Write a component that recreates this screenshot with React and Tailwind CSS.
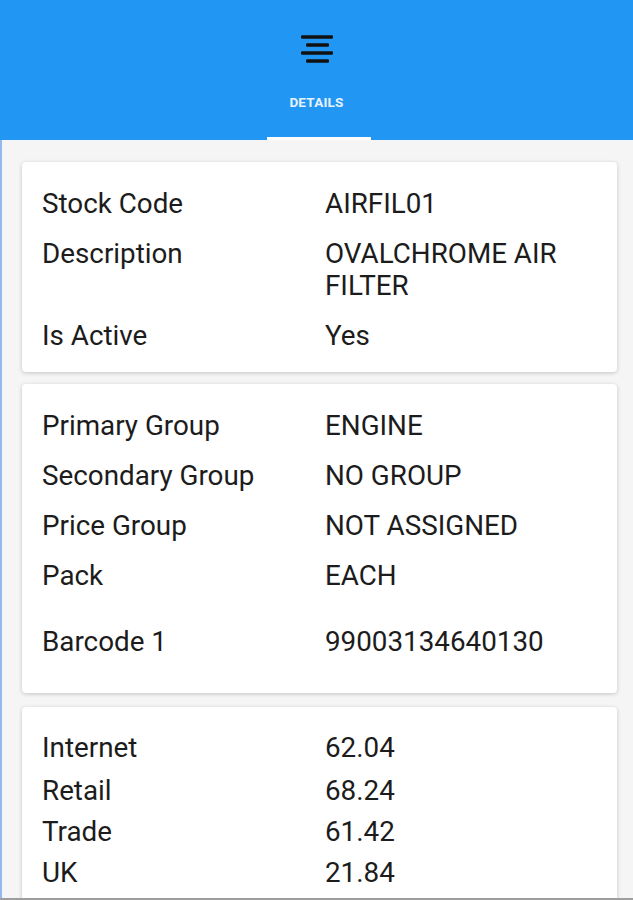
import React from "react";

const Row = ({ label, value, className = "" }) => (
  <div className={`grid grid-cols-[283px_1fr] leading-[32px] ${className}`}>
    <div>{label}</div>
    <div>{value}</div>
  </div>
);

export default function App() {
  return (
    <div
      className="relative w-[633px] h-[900px] overflow-hidden bg-[#f5f5f5] text-[#1c1c1c]"
      style={{ fontFamily: "Roboto, 'Noto Sans', sans-serif" }}
    >
      <div className="absolute left-0 top-[140px] bottom-0 w-[2px] bg-[#93b9ef]" />
      <div className="absolute left-0 right-0 bottom-0 h-[2px] bg-[#9e9e9e]" />
      <header className="h-[140px] bg-[#2196f3] flex flex-col items-center relative">
        <svg width="34" height="30" viewBox="0 0 34 30" className="mt-[34px]">
          <rect x="1" y="1.3" width="32" height="3.4" rx="1.2" fill="#111" />
          <rect x="6" y="9.3" width="23" height="3.4" rx="1.2" fill="#111" />
          <rect x="1" y="17.3" width="32" height="3.4" rx="1.2" fill="#111" />
          <rect x="6" y="25.3" width="23" height="3.4" rx="1.2" fill="#111" />
        </svg>
        <div className="mt-[28px] text-[13.5px] font-bold text-[#e6f2fd] tracking-[0.2px]">
          DETAILS
        </div>
        <div className="absolute bottom-0 left-[267px] w-[104px] h-[3px] bg-white" />
      </header>
      <main className="pl-[22px] pr-[16px] pt-[22px] flex flex-col text-[27.8px]">
        <section className="bg-white rounded-[4px] shadow-[0_1px_4px_rgba(0,0,0,0.2)] pl-[20px] pr-[16px] pt-[26px] pb-[20px] flex flex-col gap-[18px]">
          <Row label="Stock Code" value="AIRFIL01" />
          <Row label="Description" value="OVALCHROME AIR FILTER" />
          <Row label="Is Active" value="Yes" />
        </section>
        <section className="mt-[12px] bg-white rounded-[4px] shadow-[0_1px_4px_rgba(0,0,0,0.2)] pl-[20px] pr-[16px] pt-[26px] pb-[35px] flex flex-col gap-[18px]">
          <Row label="Primary Group" value="ENGINE" />
          <Row label="Secondary Group" value="NO GROUP" />
          <Row label="Price Group" value="NOT ASSIGNED" />
          <Row label="Pack" value="EACH" />
          <Row label="Barcode 1" value="99003134640130" className="mt-[16px]" />
        </section>
        <section className="mt-[14px] bg-white rounded-[4px] shadow-[0_1px_4px_rgba(0,0,0,0.2)] pl-[20px] pr-[16px] pt-[25px] pb-[24px] flex flex-col">
          <Row label="Internet" value="62.04" />
          <Row label="Retail" value="68.24" className="mt-[11px]" />
          <Row label="Trade" value="61.42" className="mt-[9px]" />
          <Row label="UK" value="21.84" className="mt-[9px]" />
        </section>
      </main>
    </div>
  );
}
